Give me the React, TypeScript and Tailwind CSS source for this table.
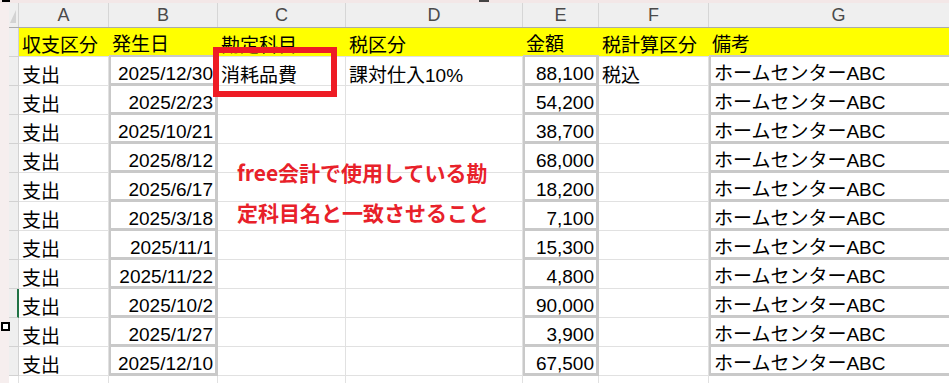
import React from 'react';

const cols = [
    { letter: 'A', w: 'w-[90px]', thick: false, right: false },
    { letter: 'B', w: 'w-[109px]', thick: true, right: true },
    { letter: 'C', w: 'w-[128px]', thick: false, right: false },
    { letter: 'D', w: 'w-[177px]', thick: false, right: false },
    { letter: 'E', w: 'w-[76px]', thick: true, right: true },
    { letter: 'F', w: 'w-[110px]', thick: false, right: false },
    { letter: 'G', w: 'w-[260px]', thick: true, right: false },
];

const headers = ['収支区分', '発生日', '勘定科目', '税区分', '金額', '税計算区分', '備考'];

const rows = [
    ['2025/12/30', '消耗品費', '課対仕入10%', '88,100', '税込'],
    ['2025/2/23', '', '', '54,200', ''],
    ['2025/10/21', '', '', '38,700', ''],
    ['2025/8/12', '', '', '68,000', ''],
    ['2025/6/17', '', '', '18,200', ''],
    ['2025/3/18', '', '', '7,100', ''],
    ['2025/11/1', '', '', '15,300', ''],
    ['2025/11/22', '', '', '4,800', ''],
    ['2025/10/2', '', '', '90,000', ''],
    ['2025/1/27', '', '', '3,900', ''],
    ['2025/12/10', '', '', '67,500', ''],
];

const App = () => {
    return (
        <div className="relative w-[949px] h-[383px] overflow-hidden bg-[#f6eeee] font-['Liberation_Sans','Noto_Sans_CJK_JP',sans-serif] text-black">
            <div className="h-[3px] bg-[#f3e7e7]"></div>
            <div className="flex">
                <div className="w-[9px] shrink-0"></div>
                <div className="flex-1 flex flex-col bg-white">
                    {/* column letters */}
                    <div className="flex h-[25px] bg-[#efefef] border-b border-[#ababab]">
                        <div className="w-[10px] shrink-0 border-r border-[#d2d2d2] relative">
                            <svg width="10" height="24" className="absolute left-0 top-0">
                                <polygon points="7,7 7,20 1,20" fill="#d3d3d3" />
                            </svg>
                        </div>
                        {cols.map((c) => (
                            <div key={c.letter} className={`${c.w} shrink-0 flex items-center justify-center border-r border-[#d6d6d6] text-[18px] text-[#4a4a4a]`}>
                                {c.letter}
                            </div>
                        ))}
                    </div>

                    {/* yellow header row */}
                    <div className="flex h-[29px]">
                        <div className="w-[10px] shrink-0 bg-[#efefef] border-r border-b border-[#d2d2d2]"></div>
                        {cols.map((c, i) => (
                            <div
                                key={c.letter}
                                className={`${c.w} shrink-0 flex items-end pl-[3px] pb-[1px] bg-[#ffff00] text-[19px] leading-[19px] whitespace-nowrap ${c.thick ? 'border-b-2 border-[#c9c9c9]' : 'border-b border-[#e1e1e1]'}`}
                            >
                                {headers[i]}
                            </div>
                        ))}
                    </div>

                    {/* data rows */}
                    {rows.map((r, ri) => {
                        const vals = ['支出', ...r, 'ホームセンターABC'];
                        return (
                            <div key={ri} className="flex h-[29px]">
                                <div className={`w-[10px] shrink-0 bg-[#efefef] border-b border-[#d2d2d2] ${ri === 8 ? 'border-r-2 border-r-[#217346]' : 'border-r'}`}></div>
                                {cols.map((c, ci) => (
                                    <div
                                        key={c.letter}
                                        className={`${c.w} shrink-0 flex items-end text-[19px] leading-[19px] whitespace-nowrap overflow-hidden ${c.right ? 'justify-end pr-[2px]' : 'pl-[3px]'} ${c.thick ? 'border-l-2 border-r-[3px] border-b-[3px] border-[#c9c9c9]' : 'border-r border-b border-[#e1e1e1]'}`}
                                    >
                                        {vals[ci]}
                                    </div>
                                ))}
                            </div>
                        );
                    })}

                    {/* partial row below */}
                    <div className="flex h-[29px]">
                        <div className="w-[10px] shrink-0 bg-white border-r border-[#e1e1e1]"></div>
                        {cols.map((c) => (
                            <div key={c.letter} className={`${c.w} shrink-0 border-r border-[#e1e1e1]`}></div>
                        ))}
                    </div>
                </div>
            </div>

            {/* red highlight box */}
            <div className="absolute left-[213px] top-[47px] w-[124px] h-[50px] border-[6px] border-[#ee1c25]"></div>

            {/* annotation */}
            <div className="absolute left-[237px] top-[152px] font-['Noto_Sans_CJK_JP',sans-serif] font-bold text-[21px] leading-[40px] text-[#e8212a] whitespace-nowrap">
                <div>free会計で使用している勘</div>
                <div>定科目名と一致させること</div>
            </div>

            {/* selection handles */}
            <div className="absolute left-[2px] top-[-6px] w-[8px] h-[8px] border-2 border-black bg-white"></div>
            <div className="absolute left-[479px] top-[-6px] w-[10px] h-[8px] border-2 border-[#444] bg-[#eeeeee]"></div>
            <div className="absolute left-[1px] top-[322px] w-[9px] h-[9px] border-2 border-black bg-white"></div>
        </div>
    );
};

export default App;
